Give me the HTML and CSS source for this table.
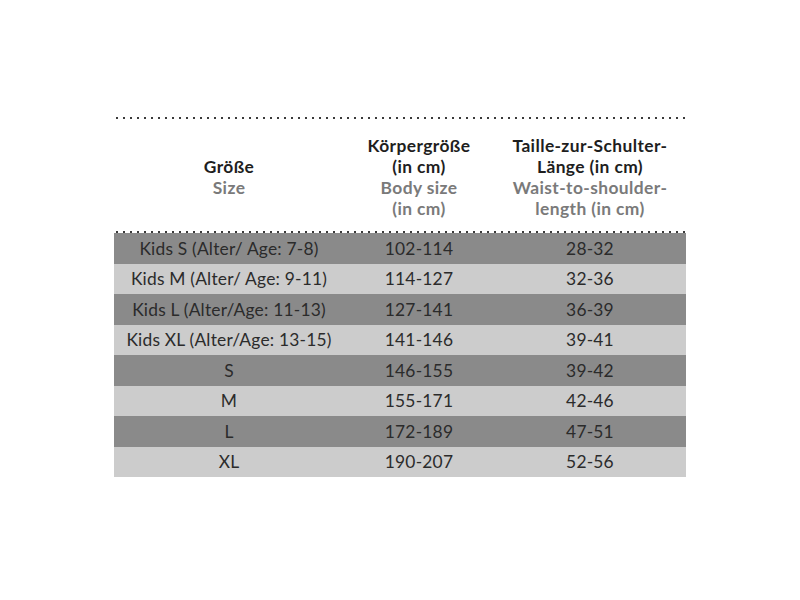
FILE: index.html
```html
<!DOCTYPE html>
<html lang="de">
<head>
<meta charset="utf-8">
<link rel="stylesheet" href="styles.css">
</head>
<body>
<div class="chart">
  <div class="dots"></div>
  <table class="sizes">
    <colgroup>
      <col class="c1"><col class="c2"><col class="c3">
    </colgroup>
    <thead>
      <tr>
        <th><span class="de">Größe</span><br><span class="en">Size</span></th>
        <th><span class="de">Körpergröße<br>(in cm)</span><br><span class="en">Body size<br>(in cm)</span></th>
        <th><span class="de">Taille-zur-Schulter-<br>Länge (in cm)</span><br><span class="en">Waist-to-shoulder-<br>length (in cm)</span></th>
      </tr>
    </thead>
  </table>
  <div class="dots"></div>
  <table class="sizes body">
    <colgroup>
      <col class="c1"><col class="c2"><col class="c3">
    </colgroup>
    <tbody>
      <tr class="dark"><td>Kids S (Alter/ Age: 7-8)</td><td>102-114</td><td>28-32</td></tr>
      <tr class="light"><td>Kids M (Alter/ Age: 9-11)</td><td>114-127</td><td>32-36</td></tr>
      <tr class="dark"><td>Kids L (Alter/Age: 11-13)</td><td>127-141</td><td>36-39</td></tr>
      <tr class="light"><td>Kids XL (Alter/Age: 13-15)</td><td>141-146</td><td>39-41</td></tr>
      <tr class="dark"><td>S</td><td>146-155</td><td>39-42</td></tr>
      <tr class="light"><td>M</td><td>155-171</td><td>42-46</td></tr>
      <tr class="dark"><td>L</td><td>172-189</td><td>47-51</td></tr>
      <tr class="light"><td>XL</td><td>190-207</td><td>52-56</td></tr>
    </tbody>
  </table>
</div>
</body>
</html>
```
FILE: styles.css
```css
html, body {
  margin: 0;
  padding: 0;
  background: #ffffff;
}
body {
  font-family: Lato, "Open Sans", sans-serif;
  color: #2b2b2b;
}
.chart {
  width: 572px;
  margin: 117px 0 0 114px;
}
.dots {
  height: 2px;
  margin-left: 2px;
  background-image: linear-gradient(to right, #3a3a3a 0 2px, transparent 2px 7px);
  background-size: 7px 2px;
  background-repeat: repeat-x;
}
.sizes {
  width: 572px;
  border-collapse: collapse;
  table-layout: fixed;
}
.c1 { width: 230px; }
.c2 { width: 150px; }
.c3 { width: 192px; }
.sizes th {
  font-weight: 700;
  font-size: 17.4px;
  line-height: 21px;
  text-align: center;
  vertical-align: middle;
  padding: 16px 0 12px;
  letter-spacing: 0.4px;
}
.de { color: #1e1e1e; }
.en { color: #7a7a7a; }
.sizes td {
  height: 30.5px;
  padding: 0;
  font-size: 17.4px;
  text-align: center;
  vertical-align: middle;
  letter-spacing: 0.2px;
}
.dark { background: #8a8a8a; }
.light { background: #cccccc; }
```
